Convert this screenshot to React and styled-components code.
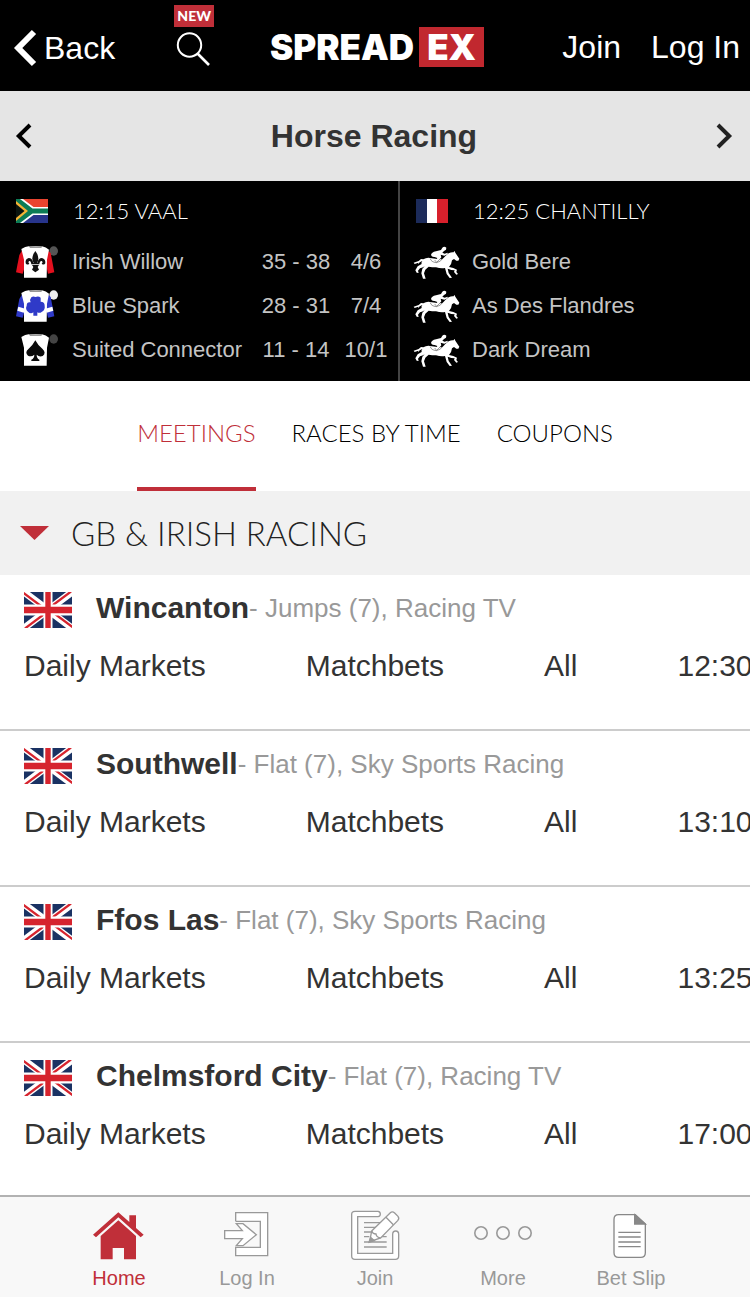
import React from "react";
import styled, { createGlobalStyle } from "styled-components";

const RED = "#c02f39";
const SANS = '"Liberation Sans", Arial, sans-serif';
const GEO = 'Lato, "Open Sans", sans-serif';

const GlobalStyle = createGlobalStyle`
  * { box-sizing: border-box; }
  body { margin: 0; background: #fff; color: #333; font-family: ${SANS}; }
  button { font: inherit; color: inherit; background: none; border: 0; padding: 0; cursor: pointer; }
  a { color: inherit; text-decoration: none; }
  svg { display: block; flex: none; overflow: visible; }
`;

const Page = styled.div`
  display: flex;
  flex-direction: column;
  height: 100vh;
`;

const Header = styled.header`
  display: grid;
  grid-template-columns: 1fr auto 1fr;
  align-items: center;
  flex: none;
  height: 91px;
  padding: 0 10px 0 14px;
  background: #000;
  color: #fff;
  font-size: 32px;
`;

const HeaderGroup = styled.div`
  display: flex;
  align-items: center;
  justify-content: ${(p) => (p.$end ? "flex-end" : "flex-start")};
  gap: ${(p) => p.$gap}px;
  padding-top: 3px;
  white-space: nowrap;
`;

const BackButton = styled.button`
  display: flex;
  align-items: center;
  gap: 8px;
  padding-top: 2px;
`;

const SearchButton = styled.button`
  position: relative;
  padding-top: 3px;
`;

const Badge = styled.span`
  position: absolute;
  left: -3px;
  top: -24px;
  width: 40px;
  background: ${RED};
  font: 900 14px/22px ${GEO};
  text-align: center;
`;

const Logo = styled.a`
  display: flex;
  align-items: center;
  gap: 5px;
  padding-top: 3px;
  font: 900 35px/40px Inter, ${SANS};
`;

const LogoTile = styled.span`
  padding: 0 8px;
  background: #c1282f;
`;

const Main = styled.main`
  flex: 1;
  min-height: 0;
  overflow: hidden auto;
  scrollbar-width: none;
`;

const TitleBar = styled.div`
  display: flex;
  align-items: center;
  justify-content: space-between;
  height: 90px;
  padding: 0 18px 0 16px;
  background: #e5e5e5;
`;

const Title = styled.h1`
  margin: 0;
  font-size: 32px;
  font-weight: 700;
`;

const Ticker = styled.section`
  display: flex;
  overflow: hidden;
  background: #000;
`;

const RaceCard = styled.article`
  flex: 0 0 400px;
  padding: 0 6px 9px 16px;
  border-right: 2px solid #444;
`;

const RaceHeading = styled.h2`
  display: flex;
  align-items: center;
  gap: 25px;
  height: 59px;
  margin: 0;
  color: #fff;
  font: 300 22px/26px ${GEO};
`;

const Runners = styled.table`
  width: 376px;
  table-layout: fixed;
  border-collapse: collapse;
  color: #c4c4c4;
  font-size: 22px;
  line-height: 26px;
`;

const Cell = styled.td`
  width: ${(p) => p.$w}px;
  height: 44px;
  padding: 0;
  text-align: ${(p) => (p.$center ? "center" : "left")};
  white-space: nowrap;
`;

const Tabs = styled.nav`
  display: flex;
  justify-content: center;
  gap: 36px;
  height: 110px;
`;

const Tab = styled.a`
  padding-top: 38px;
  border-bottom: 4px solid ${(p) => (p.$active ? RED : "transparent")};
  color: ${(p) => (p.$active ? RED : "#000")};
  font: 300 24px/28px ${GEO};
  white-space: nowrap;
`;

const SectionButton = styled.button`
  display: flex;
  align-items: center;
  gap: 22px;
  width: 100%;
  height: 84px;
  padding: 0 20px;
  background: #f1f1f1;
  color: #222;
  && { font: 300 33px/40px ${GEO}; }
`;

const Meeting = styled.article`
  height: 156px;
  padding: 17px 0 0 24px;
  border-bottom: 2px solid #ccc;
  overflow: hidden;
  white-space: nowrap;
`;

const MeetingHead = styled.div`
  display: flex;
  align-items: flex-start;
  height: 36px;
`;

const MeetingName = styled.h3`
  margin: 0 0 0 24px;
  font-size: 30px;
  line-height: 32px;
`;

const MeetingInfo = styled.span`
  color: #999;
  font-size: 26px;
  line-height: 32px;
`;

const Markets = styled.div`
  display: flex;
  gap: 100px;
  padding-top: 20px;
  font-size: 30px;
  line-height: 36px;
`;

const TabBar = styled.nav`
  display: flex;
  flex: none;
  justify-content: center;
  height: 102px;
  border-top: 2px solid #b2b2b2;
  background: #f8f8f8;
`;

const BarItem = styled.a`
  display: flex;
  flex-direction: column;
  align-items: center;
  gap: 6px;
  width: 128px;
  padding-top: 13px;
  color: ${(p) => (p.$active ? RED : "#999")};
  font-size: 20px;
  line-height: 24px;
`;

const Chevron = ({ w, h, stroke, color, right }) => (
  <svg width={w} height={h} viewBox={`0 0 ${w} ${h}`} fill="none" stroke={color} strokeWidth={stroke}>
    <path
      d={
        right
          ? `M2 2L${w - stroke * 0.7} ${h / 2}L2 ${h - 2}`
          : `M${w - 2} 2L${stroke * 0.7} ${h / 2}L${w - 2} ${h - 2}`
      }
    />
  </svg>
);

const SearchIcon = () => (
  <svg width="34" height="34" viewBox="0 0 34 34" fill="none" stroke="#fff" strokeWidth="2">
    <circle cx="12.500" cy="13" r="11.700" />
    <path d="M20.500 21.500L32 33" strokeWidth="2.600" />
  </svg>
);

const UkFlag = () => (
  <svg
    width="48"
    height="36"
    viewBox="0 0 48 36"
    role="img"
    aria-label="United Kingdom"
    style={{ overflow: "hidden" }}
  >
    <path d="M0 0h48v36H0z" fill="#1a3263" />
    <path d="M0 0L48 36M48 0L0 36" stroke="#fff" strokeWidth="7" />
    <path d="M-1 0.500L23 18.500M49 35.500L25 17.500M47 -0.500L23 17.500M1 36.500L25 18.500" stroke="#d6242e" strokeWidth="2.200" />
    <path d="M24 0v36" stroke="#fff" strokeWidth="9" />
    <path d="M0 18h48" stroke="#fff" strokeWidth="11" />
    <path d="M24 0v36" stroke="#d6242e" strokeWidth="5.400" />
    <path d="M0 18h48" stroke="#d6242e" strokeWidth="6.600" />
  </svg>
);

const SaFlag = () => (
  <svg width="32" height="24" viewBox="0 0 32 24" role="img" aria-label="South Africa">
    <path d="M0 0h32v12H0z" fill="#e8442f" />
    <path d="M0 12h32v12H0z" fill="#27348b" />
    <path d="M0 0H7L17.500 8H32V16H17.500L7 24H0z" fill="#fff" />
    <path d="M0 0H4L16.500 9.500H32V14.500H16.500L4 24H0z" fill="#0c7c56" />
    <path d="M0 2L12 12L0 22z" fill="#f5b335" />
    <path d="M0 5L8.500 12L0 19z" fill="#0a1410" />
  </svg>
);

const FranceFlag = () => (
  <svg width="32" height="24" viewBox="0 0 32 24" role="img" aria-label="France">
    <path d="M0 0h11v24H0z" fill="#1c2b5a" />
    <path d="M11 0h10v24H11z" fill="#fff" />
    <path d="M21 0h11v24H21z" fill="#d8202c" />
  </svg>
);

const Silk = ({ sleeve, cap, motif, band }) => (
  <svg width="44" height="34" viewBox="0 0 132 102">
    <ellipse cx="113" cy="18" rx="13" ry="14" fill={cap} />
    {sleeve && (
      <>
        <path d="M22 10L10 30L0 82L20 86L34 40L32 8z" fill={sleeve} />
        <path d="M88 10L104 24L115 82L96 86L86 40z" fill={sleeve} />
      </>
    )}
    {band && (
      <>
        <path d="M7 53L28 59L23 71L4 65z" fill="#fff" />
        <path d="M109 53L88 59L92 71L112 65z" fill="#fff" />
      </>
    )}
    <path d="M16 12Q28 4 38 4H78Q90 6 99 14L93 44L92 98H24V44z" fill="#fff" />
    <path d="M38 3Q60 7 80 3L76 8H42z" fill="#777" />
    {motif === "fleur" && (
      <g fill="#111">
        <path d="M58 18Q73 38 63 54H53Q43 38 58 18z" />
        <path d="M52 54Q49 39 38 39Q27 42 29 55Q33 62 40 56Q35 53 39 48Q45 47 46 58H70Q71 47 78 48Q82 53 77 56Q84 62 88 55Q89 42 78 39Q67 39 64 54z" />
        <path d="M48 60H69L65 66L69 74L58 82L48 74L52 66z" />
      </g>
    )}
    {motif === "clover" && (
      <path
        d="M46 25Q52 20 58 24Q68 20 74 26V38Q86 38 86 50Q88 62 78 68Q70 74 64 70V80H52V70Q44 76 36 68Q27 60 32 50Q32 38 44 40Q40 32 46 25z"
        fill="#2f3ac8"
      />
    )}
    {motif === "spade" && (
      <path
        d="M58 22Q65 36 79 47Q92 59 80 69Q70 73 62 65Q62 76 70 80V84H46V80Q55 76 55 65Q46 73 36 68Q25 58 38 47Q51 36 58 22z"
        fill="#0a0a0a"
      />
    )}
  </svg>
);

const Horse = () => (
  <svg width="48" height="34" viewBox="18 15 144 102" fill="#fff">
    <path d="M40 58Q50 52 60 54L82 57L97 58Q106 47 116 40Q124 36 131 37L133 32L136 38L140 44L148 56L145 62L139 62L132 57L126 61Q125 73 117 81L130 84L141 89L139 96L144 102L139 104L132 96L134 91L124 90L113 86L116 99L126 113L119 114L110 102L105 84Q92 86 78 82Q66 82 56 80L46 89L42 100L47 116L39 116L34 100L37 86L44 79Q38 84 30 85L24 92L26 99L20 98L16 91L23 79L35 72Q33 67 37 63Q28 66 24 73L25 68L14 72L11 68L26 63L33 57z" />
    <path d="M63 45Q64 37 78 34L93 30L97 23Q103 17 109 23L108 29L102 33L97 38L104 41L113 38L113 43L103 47L92 44L94 52L83 66L77 64L82 54L74 51Q65 52 63 45z" />
    <path d="M61 56Q63 66 79 68Q93 66 98 54M74 60L80 67L92 55" fill="none" stroke="#333" strokeWidth="1.500" />
  </svg>
);

const HomeIcon = () => (
  <svg width="50" height="50" viewBox="0 0 150 150" fill={RED}>
    <path d="M73 7L-3 74L6 82L73 22L140 82L149 74L126 54V16H106V36z" />
    <path d="M73 31L20 78V148H56V114H90V148H126V78z" />
  </svg>
);

const LoginIcon = () => (
  <svg width="50" height="50" viewBox="0 0 150 150" fill="none" stroke="#999" strokeWidth="4">
    <path d="M41 34V8H137V137H41V112H115V34H41" fill="#fff" />
    <path d="M8 62H61L43 41H63L103 74L63 107H43L61 86H8z" fill="#fff" />
  </svg>
);

const JoinIcon = () => (
  <svg width="50" height="50" viewBox="0 0 150 150" fill="none" stroke="#999" strokeWidth="4">
    <path
      d="M84 4H15Q5 4 5 13V138Q5 148 15 148H136Q146 148 146 138V73Q146 63 137 63Q128 63 128 73V130H23V20H84Q91 19 91 12Q91 5 84 4z"
      fill="#fff"
    />
    <path d="M42 38H90M42 52H78M42 66H68M42 80H58M94 80H110M42 96H110M42 111H110" />
    <path d="M65 63L121 8Q127 3 134 9L144 19Q149 25 143 32L92 84L59 95z" fill="#fff" />
    <path d="M65 63Q68 72 78 72Q79 82 92 84M108 22L130 44" />
    <path d="M57 97L62 82L73 92z" fill="#999" />
  </svg>
);

const MoreIcon = () => (
  <svg width="60" height="50" viewBox="0 0 60 50" fill="none" stroke="#999" strokeWidth="1.600">
    <circle cx="8" cy="23" r="6.200" />
    <circle cx="30" cy="23" r="6.200" />
    <circle cx="52" cy="23" r="6.200" />
  </svg>
);

const SlipIcon = () => (
  <svg width="50" height="50" viewBox="0 0 150 150" fill="none" stroke="#888" strokeWidth="4">
    <path d="M86 14H38Q24 14 24 28V128Q24 142 38 142H104Q118 142 118 128V42L88 14z" fill="#fff" />
    <path d="M86 14V42H118z" fill="#888" />
    <path d="M37 67H104M37 81H104M37 96H104M37 110H104" />
  </svg>
);

const races = [
  {
    label: "12:15 VAAL",
    flag: <SaFlag />,
    runners: [
      { icon: <Silk sleeve="#e4101e" cap="#555" motif="fleur" />, name: "Irish Willow", range: "35 - 38", odds: "4/6" },
      { icon: <Silk sleeve="#2f3ac8" cap="#eee" motif="clover" band />, name: "Blue Spark", range: "28 - 31", odds: "7/4" },
      { icon: <Silk cap="#444" motif="spade" />, name: "Suited Connector", range: "11 - 14", odds: "10/1" },
    ],
  },
  {
    label: "12:25 CHANTILLY",
    flag: <FranceFlag />,
    runners: ["Gold Bere", "As Des Flandres", "Dark Dream"].map((name) => ({ icon: <Horse />, name })),
  },
];

const meetings = [
  { name: "Wincanton", info: "- Jumps (7), Racing TV", time: "12:30" },
  { name: "Southwell", info: "- Flat (7), Sky Sports Racing", time: "13:10" },
  { name: "Ffos Las", info: "- Flat (7), Sky Sports Racing", time: "13:25" },
  { name: "Chelmsford City", info: "- Flat (7), Racing TV", time: "17:00" },
];

const barItems = [
  { label: "Home", icon: <HomeIcon />, active: true },
  { label: "Log In", icon: <LoginIcon /> },
  { label: "Join", icon: <JoinIcon /> },
  { label: "More", icon: <MoreIcon /> },
  { label: "Bet Slip", icon: <SlipIcon /> },
];

export default function App() {
  return (
    <Page>
      <GlobalStyle />
      <Header>
        <HeaderGroup $gap={62}>
          <BackButton>
            <Chevron w={22} h={36} stroke={6} color="#fff" />
            Back
          </BackButton>
          <SearchButton aria-label="Search">
            <SearchIcon />
            <Badge>NEW</Badge>
          </SearchButton>
        </HeaderGroup>
        <Logo href="#home">
          <span>SPREAD</span>
          <LogoTile>EX</LogoTile>
        </Logo>
        <HeaderGroup $gap={30} $end>
          <a href="#join">Join</a>
          <a href="#login">Log In</a>
        </HeaderGroup>
      </Header>
      <Main>
        <TitleBar>
          <button aria-label="Previous sport">
            <Chevron w={16} h={26} stroke={4} color="#000" />
          </button>
          <Title>Horse Racing</Title>
          <button aria-label="Next sport">
            <Chevron w={16} h={26} stroke={4} color="#222" right />
          </button>
        </TitleBar>
        <Ticker>
          {races.map((race) => (
            <RaceCard key={race.label}>
              <RaceHeading>
                {race.flag}
                {race.label}
              </RaceHeading>
              <Runners>
                <tbody>
                  {race.runners.map((r) => (
                    <tr key={r.name}>
                      <Cell $w={56}>{r.icon}</Cell>
                      <Cell $w={180}>{r.name}</Cell>
                      <Cell $w={88} $center>{r.range}</Cell>
                      <Cell $w={52} $center>{r.odds}</Cell>
                    </tr>
                  ))}
                </tbody>
              </Runners>
            </RaceCard>
          ))}
        </Ticker>
        <Tabs>
          <Tab href="#meetings" $active>MEETINGS</Tab>
          <Tab href="#times">RACES BY TIME</Tab>
          <Tab href="#coupons">COUPONS</Tab>
        </Tabs>
        <SectionButton aria-expanded="true">
          <svg width="29" height="14" viewBox="0 0 29 14" fill={RED}>
            <path d="M0 0H29L14.500 14z" />
          </svg>
          GB &amp; IRISH RACING
        </SectionButton>
        {meetings.map((m) => (
          <Meeting key={m.name}>
            <MeetingHead>
              <UkFlag />
              <MeetingName>{m.name}</MeetingName>
              <MeetingInfo>{m.info}</MeetingInfo>
            </MeetingHead>
            <Markets>
              <a href="#daily">Daily Markets</a>
              <a href="#matchbets">Matchbets</a>
              <a href="#all">All</a>
              <a href="#race">{m.time}</a>
            </Markets>
          </Meeting>
        ))}
      </Main>
      <TabBar>
        {barItems.map((b) => (
          <BarItem key={b.label} href="#tab" $active={b.active}>
            {b.icon}
            {b.label}
          </BarItem>
        ))}
      </TabBar>
    </Page>
  );
}
